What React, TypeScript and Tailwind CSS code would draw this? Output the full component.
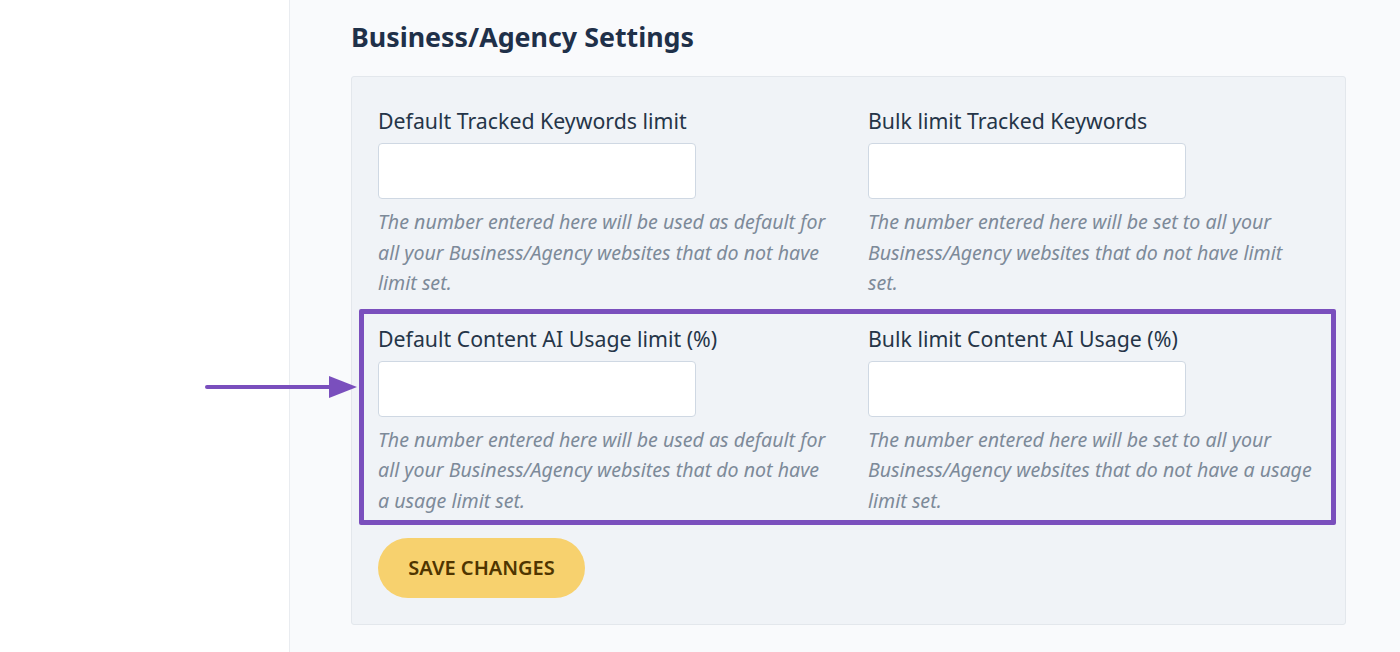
import React from "react";

type Field = {
  label: string;
  help: string;
};

const ROWS: Field[][] = [
  [
    {
      label: "Default Tracked Keywords limit",
      help: "The number entered here will be used as default for all your Business/Agency websites that do not have limit set.",
    },
    {
      label: "Bulk limit Tracked Keywords",
      help: "The number entered here will be set to all your Business/Agency websites that do not have limit set.",
    },
  ],
  [
    {
      label: "Default Content AI Usage limit (%)",
      help: "The number entered here will be used as default for all your Business/Agency websites that do not have a usage limit set.",
    },
    {
      label: "Bulk limit Content AI Usage (%)",
      help: "The number entered here will be set to all your Business/Agency websites that do not have a usage limit set.",
    },
  ],
];

function SettingField({ field, narrow }: { field: Field; narrow?: boolean }) {
  return (
    <div className="flex flex-col">
      <label className="text-[21.3px] leading-[28px] text-[#253548]">{field.label}</label>
      <input
        type="text"
        className="mt-2 h-[56px] w-[318px] rounded-[4px] border border-[#cfd8e3] bg-white px-3 text-[18px] outline-none"
      />
      <p
        className={`mt-2 text-[19.6px] italic leading-[30.5px] text-[#7d8a99] ${
          narrow ? "max-w-[446px]" : "max-w-[455px]"
        }`}
      >
        {field.help}
      </p>
    </div>
  );
}

export default function App() {
  return (
    <div
      className="flex h-[652px] w-full overflow-hidden bg-white"
      style={{ fontFamily: '"Noto Sans", "Open Sans", sans-serif' }}
    >
      <aside className="relative w-[290px] shrink-0 border-r border-[#e9ecf0] bg-white">
        {/* pointer arrow */}
        <div className="absolute left-[205px] top-[376px] z-10 flex items-center">
          <div className="h-[4px] w-[124px] rounded-l-full bg-[#7a4fbd]" />
          <svg width="28" height="22" viewBox="0 0 28 22" className="block">
            <polygon points="0,0 28,11 0,22" fill="#7a4fbd" />
          </svg>
        </div>
      </aside>

      <main className="flex-1 bg-[#f9fafc] pl-[61px]">
        <h1 className="pt-[18px] text-[26.8px] font-bold leading-[38px] text-[#1f3049]">
          Business/Agency Settings
        </h1>

        <section className="relative mt-[20px] w-[995px] rounded-[3px] border border-[#e3e7ec] bg-[#f0f3f7] px-[26px] pb-[26px] pt-[30px]">
          <div className="flex flex-col gap-[26px]">
            {ROWS.map((row, i) => (
              <div key={i} className="grid grid-cols-[490px_1fr]">
                {row.map((f, j) => (
                  <SettingField key={f.label} field={f} narrow={j === 1} />
                ))}
              </div>
            ))}
          </div>

          <button className="mt-[22px] h-[60px] w-[207px] rounded-full bg-[#f7d16e] text-[20px] font-semibold text-[#4f3500]">
            SAVE CHANGES
          </button>

          {/* highlight around the Content AI row */}
          <div className="pointer-events-none absolute left-[7px] top-[232px] h-[216px] w-[977px] rounded-[2px] border-[5px] border-[#7a4fbd]" />
        </section>
      </main>
    </div>
  );
}
